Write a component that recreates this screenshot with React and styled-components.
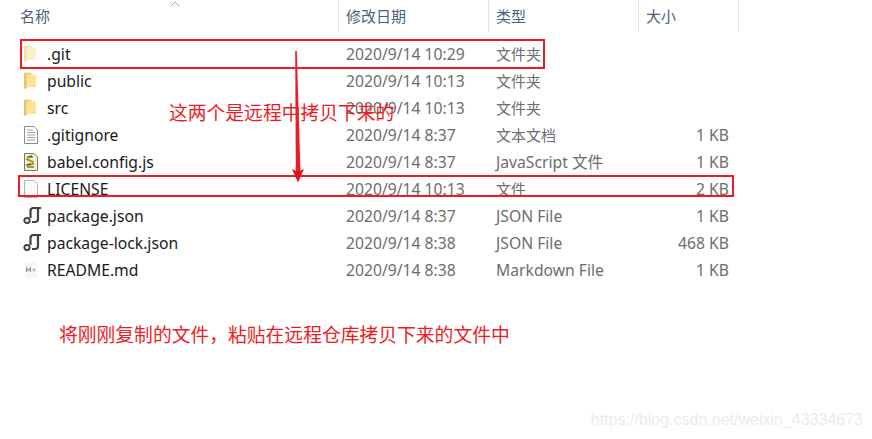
import React from 'react';
import styled, { createGlobalStyle } from 'styled-components';

const GlobalStyle = createGlobalStyle`
    html, body {
        margin: 0;
        padding: 0;
        background: #fff;
    }
`

const FolderIcon = ({ faded }) => (
    <svg width="16" height="20" viewBox="0 0 16 20" style={{ opacity: faded ? 0.5 : 1 }}>
        <path d="M1 2 L4 1.5 L4 17 L1 18 Z" fill="#e9c466" />
        <path d="M3.5 1.5 H8 L9 3.5 H12.5 V16 H3.5 Z" fill="#f6d67e" />
        <path d="M3.5 4 H12.5 V16 H3.5 Z" fill="#fbe39b" />
    </svg>
)

const TextIcon = () => (
    <svg width="16" height="20" viewBox="0 0 16 20">
        <path d="M1.5 1.5 H11 L14.5 5 V18.5 H1.5 Z" fill="#fff" stroke="#8c8c8c" />
        <path d="M4 5 H10 M4 7.5 H12 M4 10 H12 M4 12.5 H12 M4 15 H12" stroke="#a0a0a0" strokeWidth="1" />
    </svg>
)

const ScriptIcon = () => (
    <svg width="16" height="20" viewBox="0 0 16 20">
        <path d="M1.5 1.5 H11 L14.5 5 V18.5 H1.5 Z" fill="#f4f1df" stroke="#77756a" />
        <path d="M10 5 H5 L4 7.5 L9.5 9.5 L10 12 L4 13 L5 15 H11" fill="none" stroke="#a8a026" strokeWidth="2" />
        <path d="M9 4 L6 4.5 M4 13 L8 12" stroke="#35352a" strokeWidth="1" />
    </svg>
)

const BlankIcon = () => (
    <svg width="16" height="20" viewBox="0 0 16 20">
        <path d="M1.5 1.5 H11 L14.5 5 V18.5 H1.5 Z" fill="#fbfbfb" stroke="#b4b4b4" />
    </svg>
)

const NodeIcon = () => (
    <svg width="19" height="20" viewBox="0 0 19 20">
        <path d="M7.5 12 V5 Q7.5 2 10.5 2 H18" fill="none" stroke="#404040" strokeWidth="2.2" />
        <path d="M15 3 V13 Q15 16 12 16 H9" fill="none" stroke="#404040" strokeWidth="2.2" />
        <circle cx="4" cy="14.5" r="2.7" fill="#e4e4e4" stroke="#3c3c3c" strokeWidth="1.8" />
    </svg>
)

const MarkdownIcon = () => (
    <svg width="16" height="20" viewBox="0 0 16 20">
        <path d="M2 2 H14 V18 H2 Z" fill="#f7f7f7" />
        <path d="M3.5 12 V8 L5.5 10.5 L7.5 8 V12" fill="none" stroke="#9a9a9a" strokeWidth="1.2" />
        <path d="M9.5 10 H12.5 M11 8.5 V11.5" stroke="#a8a8a8" strokeWidth="1.2" />
    </svg>
)

const files = [
    { name: '.git', date: '2020/9/14 10:29', type: '文件夹', cjk: true, size: '', icon: <FolderIcon faded /> },
    { name: 'public', date: '2020/9/14 10:13', type: '文件夹', cjk: true, size: '', icon: <FolderIcon /> },
    { name: 'src', date: '2020/9/14 10:13', type: '文件夹', cjk: true, size: '', icon: <FolderIcon /> },
    { name: '.gitignore', date: '2020/9/14 8:37', type: '文本文档', cjk: true, size: '1 KB', icon: <TextIcon /> },
    { name: 'babel.config.js', date: '2020/9/14 8:37', type: 'JavaScript 文件', size: '1 KB', icon: <ScriptIcon /> },
    { name: 'LICENSE', date: '2020/9/14 10:13', type: '文件', cjk: true, size: '2 KB', icon: <BlankIcon /> },
    { name: 'package.json', date: '2020/9/14 8:37', type: 'JSON File', size: '1 KB', icon: <NodeIcon /> },
    { name: 'package-lock.json', date: '2020/9/14 8:38', type: 'JSON File', size: '468 KB', icon: <NodeIcon /> },
    { name: 'README.md', date: '2020/9/14 8:38', type: 'Markdown File', size: '1 KB', icon: <MarkdownIcon /> },
]

const App = () => {
    return (
        <Page>
            <GlobalStyle />
            <SortArrow width="16" height="8" viewBox="0 0 16 8">
                <path d="M3.5 6.5 L8 2 L12.5 6.5" fill="none" stroke="#a8a8a8" />
            </SortArrow>
            <Header>
                <HeaderCell>名称</HeaderCell>
                <HeaderCell>修改日期</HeaderCell>
                <HeaderCell>类型</HeaderCell>
                <HeaderCell>大小</HeaderCell>
            </Header>
            <List>
                {files.map((file) => (
                    <Row key={file.name}>
                        <NameCell>
                            <IconSlot>{file.icon}</IconSlot>
                            {file.name}
                        </NameCell>
                        <Cell>{file.date}</Cell>
                        <Cell $cjk={file.cjk}>{file.type}</Cell>
                        <SizeCell>{file.size}</SizeCell>
                    </Row>
                ))}
            </List>

            <RedBox $left={20} $top={39} $width={525} $height={30} />
            <RedBox $left={18} $top={175} $width={716} $height={22} />
            <Arrow width="14" height="132" viewBox="0 0 14 132">
                <path d="M4.2 0 L5.8 0 L9.5 122 L4.8 122 Z" fill="#ed1c24" />
                <path d="M1 118 L7 131.5 L13 118 L7 121 Z" fill="#d5171f" />
            </Arrow>
            <Note $left={169} $top={100}>这两个是远程中拷贝下来的</Note>
            <Note $left={59} $top={322}>将刚刚复制的文件，粘贴在远程仓库拷贝下来的文件中</Note>
            <Watermark>https://blog.csdn.net/weixin_43334673</Watermark>
        </Page>
    );
}

export default App;

const Page = styled.div`
    position: relative;
    width: 872px;
    height: 439px;
    overflow: hidden;
    background: #fff;
    font-family: "Noto Sans", "Noto Sans CJK SC", sans-serif;
`

const SortArrow = styled.svg`
    position: absolute;
    left: 167px;
    top: 0;
`

const Header = styled.div`
    display: grid;
    grid-template-columns: 339px 150px 150px 100px;
    height: 32px;
`

const HeaderCell = styled.div`
    display: flex;
    align-items: center;
    padding: 0 0 2px 7px;
    box-sizing: border-box;
    font-size: 15px;
    color: #4c607a;
    border-right: 1px solid #e5e5e5;
    &:first-child{
        padding-left: 20px;
    }
`

const List = styled.div`
    display: flex;
    flex-direction: column;
    padding-top: 8px;
`

const Row = styled.div`
    display: grid;
    grid-template-columns: 339px 150px 150px 100px;
    height: 27px;
    align-items: center;
`

const Cell = styled.div`
    padding-left: 7px;
    font-size: ${(p) => (p.$cjk ? 15 : 15.7)}px;
    color: #6d6d6d;
    white-space: nowrap;
`

const NameCell = styled.div`
    display: flex;
    align-items: center;
    padding-left: 23px;
    font-size: 15.7px;
    color: #1a1a1a;
    white-space: nowrap;
`

const IconSlot = styled.span`
    display: flex;
    width: 24px;
`

const SizeCell = styled(Cell)`
    padding: 0 10px 0 0;
    text-align: right;
`

const RedBox = styled.div`
    position: absolute;
    box-sizing: border-box;
    left: ${(p) => p.$left}px;
    top: ${(p) => p.$top}px;
    width: ${(p) => p.$width}px;
    height: ${(p) => p.$height}px;
    border: 2px solid #ed1c24;
`

const Arrow = styled.svg`
    position: absolute;
    left: 291px;
    top: 51px;
`

const Note = styled.div`
    position: absolute;
    left: ${(p) => p.$left}px;
    top: ${(p) => p.$top}px;
    font-size: 18.8px;
    line-height: 26px;
    color: #ed1c24;
    white-space: nowrap;
`

const Watermark = styled.div`
    position: absolute;
    right: 9px;
    top: 411px;
    font-family: "Liberation Sans", sans-serif;
    font-size: 16px;
    line-height: 18px;
    color: #ebebeb;
    white-space: nowrap;
`
